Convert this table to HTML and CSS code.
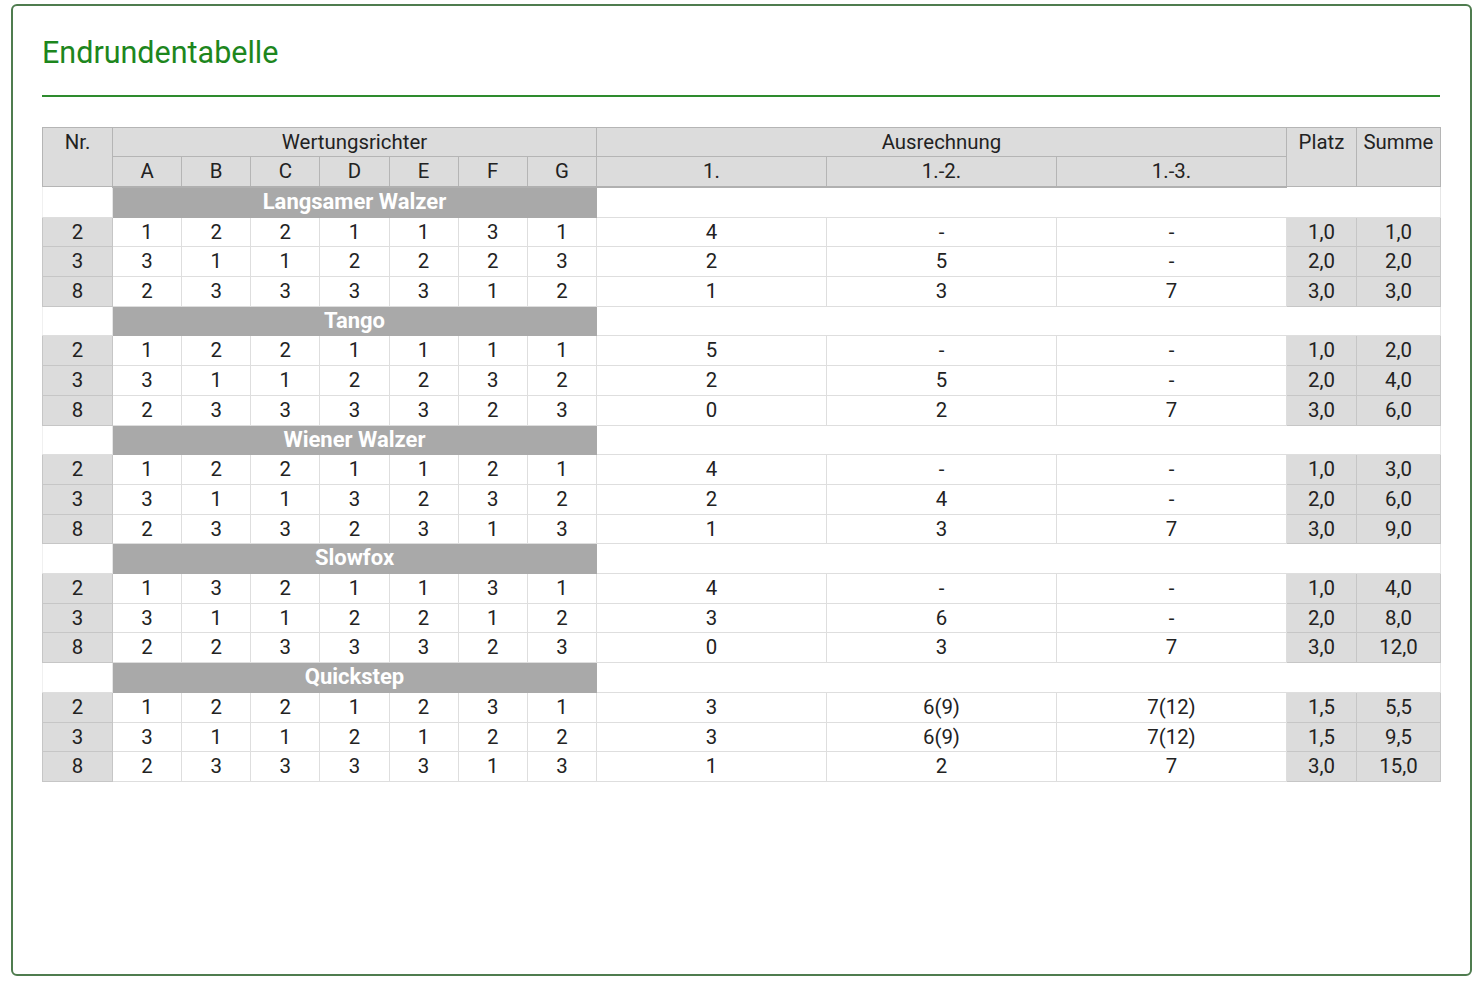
FILE: index.html
```html
<!DOCTYPE html>
<html lang="de">
<head>
<meta charset="utf-8">
<title>Endrundentabelle</title>
<link rel="stylesheet" href="styles.css">
</head>
<body>
<div class="card">
  <h1 class="title">Endrundentabelle</h1>
  <div class="rule"></div>
  <table class="results">
    <colgroup>
      <col class="c-nr">
      <col class="c-j"><col class="c-j"><col class="c-j"><col class="c-j"><col class="c-j"><col class="c-j"><col class="c-j">
      <col class="c-a"><col class="c-a"><col class="c-a">
      <col class="c-p"><col class="c-s">
    </colgroup>
    <thead>
      <tr>
        <th rowspan="2" class="top">Nr.</th>
        <th colspan="7">Wertungsrichter</th>
        <th colspan="3">Ausrechnung</th>
        <th rowspan="2" class="top">Platz</th>
        <th rowspan="2" class="top">Summe</th>
      </tr>
      <tr class="h2">
        <th>A</th><th>B</th><th>C</th><th>D</th><th>E</th><th>F</th><th>G</th>
        <th>1.</th><th>1.-2.</th><th>1.-3.</th>
      </tr>
    </thead>
    <tbody>
      <tr class="dance"><td class="blank"></td><td colspan="7" class="dname">Langsamer Walzer</td><td colspan="5" class="blank"></td></tr>
      <tr><td class="nr">2</td><td>1</td><td>2</td><td>2</td><td>1</td><td>1</td><td>3</td><td>1</td><td>4</td><td>-</td><td>-</td><td class="sum">1,0</td><td class="sum">1,0</td></tr>
      <tr><td class="nr">3</td><td>3</td><td>1</td><td>1</td><td>2</td><td>2</td><td>2</td><td>3</td><td>2</td><td>5</td><td>-</td><td class="sum">2,0</td><td class="sum">2,0</td></tr>
      <tr><td class="nr">8</td><td>2</td><td>3</td><td>3</td><td>3</td><td>3</td><td>1</td><td>2</td><td>1</td><td>3</td><td>7</td><td class="sum">3,0</td><td class="sum">3,0</td></tr>

      <tr class="dance"><td class="blank"></td><td colspan="7" class="dname">Tango</td><td colspan="5" class="blank"></td></tr>
      <tr><td class="nr">2</td><td>1</td><td>2</td><td>2</td><td>1</td><td>1</td><td>1</td><td>1</td><td>5</td><td>-</td><td>-</td><td class="sum">1,0</td><td class="sum">2,0</td></tr>
      <tr><td class="nr">3</td><td>3</td><td>1</td><td>1</td><td>2</td><td>2</td><td>3</td><td>2</td><td>2</td><td>5</td><td>-</td><td class="sum">2,0</td><td class="sum">4,0</td></tr>
      <tr><td class="nr">8</td><td>2</td><td>3</td><td>3</td><td>3</td><td>3</td><td>2</td><td>3</td><td>0</td><td>2</td><td>7</td><td class="sum">3,0</td><td class="sum">6,0</td></tr>

      <tr class="dance"><td class="blank"></td><td colspan="7" class="dname">Wiener Walzer</td><td colspan="5" class="blank"></td></tr>
      <tr><td class="nr">2</td><td>1</td><td>2</td><td>2</td><td>1</td><td>1</td><td>2</td><td>1</td><td>4</td><td>-</td><td>-</td><td class="sum">1,0</td><td class="sum">3,0</td></tr>
      <tr><td class="nr">3</td><td>3</td><td>1</td><td>1</td><td>3</td><td>2</td><td>3</td><td>2</td><td>2</td><td>4</td><td>-</td><td class="sum">2,0</td><td class="sum">6,0</td></tr>
      <tr><td class="nr">8</td><td>2</td><td>3</td><td>3</td><td>2</td><td>3</td><td>1</td><td>3</td><td>1</td><td>3</td><td>7</td><td class="sum">3,0</td><td class="sum">9,0</td></tr>

      <tr class="dance"><td class="blank"></td><td colspan="7" class="dname">Slowfox</td><td colspan="5" class="blank"></td></tr>
      <tr><td class="nr">2</td><td>1</td><td>3</td><td>2</td><td>1</td><td>1</td><td>3</td><td>1</td><td>4</td><td>-</td><td>-</td><td class="sum">1,0</td><td class="sum">4,0</td></tr>
      <tr><td class="nr">3</td><td>3</td><td>1</td><td>1</td><td>2</td><td>2</td><td>1</td><td>2</td><td>3</td><td>6</td><td>-</td><td class="sum">2,0</td><td class="sum">8,0</td></tr>
      <tr><td class="nr">8</td><td>2</td><td>2</td><td>3</td><td>3</td><td>3</td><td>2</td><td>3</td><td>0</td><td>3</td><td>7</td><td class="sum">3,0</td><td class="sum">12,0</td></tr>

      <tr class="dance"><td class="blank"></td><td colspan="7" class="dname">Quickstep</td><td colspan="5" class="blank"></td></tr>
      <tr><td class="nr">2</td><td>1</td><td>2</td><td>2</td><td>1</td><td>2</td><td>3</td><td>1</td><td>3</td><td>6(9)</td><td>7(12)</td><td class="sum">1,5</td><td class="sum">5,5</td></tr>
      <tr><td class="nr">3</td><td>3</td><td>1</td><td>1</td><td>2</td><td>1</td><td>2</td><td>2</td><td>3</td><td>6(9)</td><td>7(12)</td><td class="sum">1,5</td><td class="sum">9,5</td></tr>
      <tr><td class="nr">8</td><td>2</td><td>3</td><td>3</td><td>3</td><td>3</td><td>1</td><td>3</td><td>1</td><td>2</td><td>7</td><td class="sum">3,0</td><td class="sum">15,0</td></tr>
    </tbody>
  </table>
</div>
</body>
</html>
```
FILE: styles.css
```css
html, body {
  margin: 0;
  padding: 0;
  background: #ffffff;
}

body {
  font-family: Roboto, "Liberation Sans", Arial, sans-serif;
  color: #222222;
  padding: 4px 10px 0 11px;
}

.card {
  box-sizing: border-box;
  width: 1461px;
  height: 972px;
  border: 2px solid #4f7c4f;
  border-radius: 6px;
  padding: 29px 30px 0 29px;
}

.title {
  margin: 0;
  font-size: 30.5px;
  line-height: 36px;
  font-weight: 400;
  color: #1d861d;
}

.rule {
  margin-top: 24px;
  height: 1.5px;
  background: #2e8b2e;
}

.results {
  margin-top: 30px;
  width: 1398px;
  table-layout: fixed;
  border-collapse: collapse;
  font-size: 20.4px;
}

.c-nr { width: 70px; }
.c-j { width: 69.14px; }
.c-a { width: 230px; }
.c-p { width: 70px; }
.c-s { width: 84px; }

.results th,
.results td {
  padding: 0;
  height: 28.7px;
  line-height: 28.7px;
  text-align: center;
  font-weight: 400;
}

.results th {
  background: #dcdcdc;
  border: 1px solid #b5b5b5;
  color: #222222;
}

.results th.top {
  vertical-align: top;
}

.results thead tr.h2 th {
  border-bottom: 2px solid #b0b0b0;
}

.results td {
  border: 1px solid #dedede;
  background: #ffffff;
}

.results td.nr,
.results td.sum {
  background: #dcdcdc;
  border-color: #c6c6c6;
}

.results td.blank {
  background: #ffffff;
  border-left-color: #f0f0f0;
  border-right-color: #e6e6e6;
}

.results td.dname {
  background: #a9a9a9;
  border-color: #a9a9a9;
  color: #ffffff;
  font-weight: 700;
  font-size: 22px;
}
```
